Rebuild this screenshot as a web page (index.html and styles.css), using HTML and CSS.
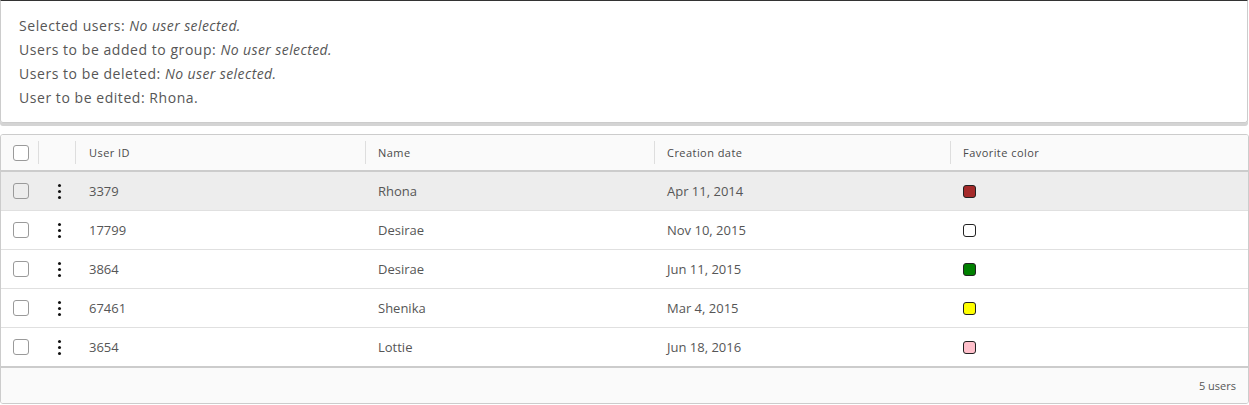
FILE: index.html
```html
<!DOCTYPE html>
<html>
<head>
<meta charset="utf-8">
<link rel="stylesheet" href="styles.css">
</head>
<body>
<div class="card">
  <div class="line">Selected users: <em>No user selected.</em></div>
  <div class="line">Users to be added to group: <em>No user selected.</em></div>
  <div class="line">Users to be deleted: <em>No user selected.</em></div>
  <div class="line">User to be edited: Rhona.</div>
</div>
<div class="grid">
  <div class="row head">
    <div class="cell c-sel"><span class="cb"></span></div>
    <div class="cell c-act"></div>
    <div class="cell c-col">User ID</div>
    <div class="cell c-col sep">Name</div>
    <div class="cell c-col c-date sep">Creation date</div>
    <div class="cell c-col c-fav sep">Favorite color</div>
  </div>
  <div class="row selected">
    <div class="cell c-sel"><span class="cb"></span></div>
    <div class="cell c-act"><span class="kebab"><i></i><i></i><i></i></span></div>
    <div class="cell c-col">3379</div>
    <div class="cell c-col">Rhona</div>
    <div class="cell c-col c-date">Apr 11, 2014</div>
    <div class="cell c-col c-fav"><span class="swatch brown"></span></div>
  </div>
  <div class="row">
    <div class="cell c-sel"><span class="cb"></span></div>
    <div class="cell c-act"><span class="kebab"><i></i><i></i><i></i></span></div>
    <div class="cell c-col">17799</div>
    <div class="cell c-col">Desirae</div>
    <div class="cell c-col c-date">Nov 10, 2015</div>
    <div class="cell c-col c-fav"><span class="swatch white"></span></div>
  </div>
  <div class="row">
    <div class="cell c-sel"><span class="cb"></span></div>
    <div class="cell c-act"><span class="kebab"><i></i><i></i><i></i></span></div>
    <div class="cell c-col">3864</div>
    <div class="cell c-col">Desirae</div>
    <div class="cell c-col c-date">Jun 11, 2015</div>
    <div class="cell c-col c-fav"><span class="swatch green"></span></div>
  </div>
  <div class="row">
    <div class="cell c-sel"><span class="cb"></span></div>
    <div class="cell c-act"><span class="kebab"><i></i><i></i><i></i></span></div>
    <div class="cell c-col">67461</div>
    <div class="cell c-col">Shenika</div>
    <div class="cell c-col c-date">Mar 4, 2015</div>
    <div class="cell c-col c-fav"><span class="swatch yellow"></span></div>
  </div>
  <div class="row last">
    <div class="cell c-sel"><span class="cb"></span></div>
    <div class="cell c-act"><span class="kebab"><i></i><i></i><i></i></span></div>
    <div class="cell c-col">3654</div>
    <div class="cell c-col">Lottie</div>
    <div class="cell c-col c-date">Jun 18, 2016</div>
    <div class="cell c-col c-fav"><span class="swatch pink"></span></div>
  </div>
  <div class="footer">5 users</div>
</div>
</body>
</html>
```
FILE: styles.css
```css
html, body {
  margin: 0;
  padding: 0;
  background: #fff;
}
body {
  font-family: "Open Sans", "Noto Sans", sans-serif;
  color: #565656;
  width: 1249px;
}
.card {
  box-sizing: border-box;
  width: 1248px;
  border: 1px solid #ccc;
  border-top: 1px solid #333;
  border-radius: 0 0 3px 3px;
  box-shadow: 0 3px 0 0 #d4d4d4;
  padding: 13px 18px 12px;
}
.line {
  font-size: 14px;
  line-height: 24px;
  letter-spacing: 0.55px;
}
.line em {
  font-style: italic;
  letter-spacing: 0.4px;
}
.grid {
  box-sizing: border-box;
  width: 1249px;
  margin-top: 11px;
  border: 1px solid #ccc;
  border-radius: 3px;
  overflow: hidden;
}
.row {
  display: flex;
  height: 38px;
  align-items: center;
  border-bottom: 1px solid #e0e0e0;
  font-size: 13px;
}
.row.selected {
  background: #ededed;
}
.row.head {
  height: 35px;
  background: #fafafa;
  border-bottom: 2px solid #ccc;
  font-size: 11px;
  font-weight: 500;
  letter-spacing: 0.45px;
  color: #4a4a4a;
}
.row.last {
  border-bottom: 2px solid #ccc;
}
.cell {
  box-sizing: border-box;
  height: 100%;
  display: flex;
  align-items: center;
}
.c-sel {
  width: 38px;
  padding-left: 12px;
  flex: none;
}
.c-act {
  width: 37px;
  flex: none;
  justify-content: center;
}
.head .c-sel, .head .c-act, .head .sep {
  position: relative;
}
.head .c-sel::after, .head .c-act::after, .head .sep::before {
  content: "";
  position: absolute;
  top: 6px;
  bottom: 6px;
  width: 1px;
  background: #dedede;
}
.head .c-sel::after, .head .c-act::after {
  right: 0;
}
.head .sep::before {
  left: 0;
}
.c-col {
  width: 289px;
  flex: none;
  padding-left: 13px;
}
.c-date {
  width: 296px;
}
.c-fav {
  flex: 1;
}
.cb {
  box-sizing: border-box;
  width: 16px;
  height: 16px;
  border: 1px solid #9a9a9a;
  border-radius: 3px;
  background: #fff;
}
.selected .cb {
  background: transparent;
}
.kebab {
  display: flex;
  flex-direction: column;
  gap: 3px;
  margin-left: 3px;
}
.kebab i {
  display: block;
  width: 3px;
  height: 3px;
  border-radius: 50%;
  background: #111;
}
.swatch {
  box-sizing: border-box;
  width: 13px;
  height: 13px;
  border: 1px solid #222;
  border-radius: 3px;
}
.brown { background: #a52a2a; }
.white { background: #fff; }
.green { background: #008000; }
.yellow { background: #ffff00; }
.pink { background: #ffc0cb; }
.footer {
  height: 35px;
  background: #fafafa;
  display: flex;
  align-items: center;
  justify-content: flex-end;
  padding-right: 12px;
  font-size: 11px;
}
```
